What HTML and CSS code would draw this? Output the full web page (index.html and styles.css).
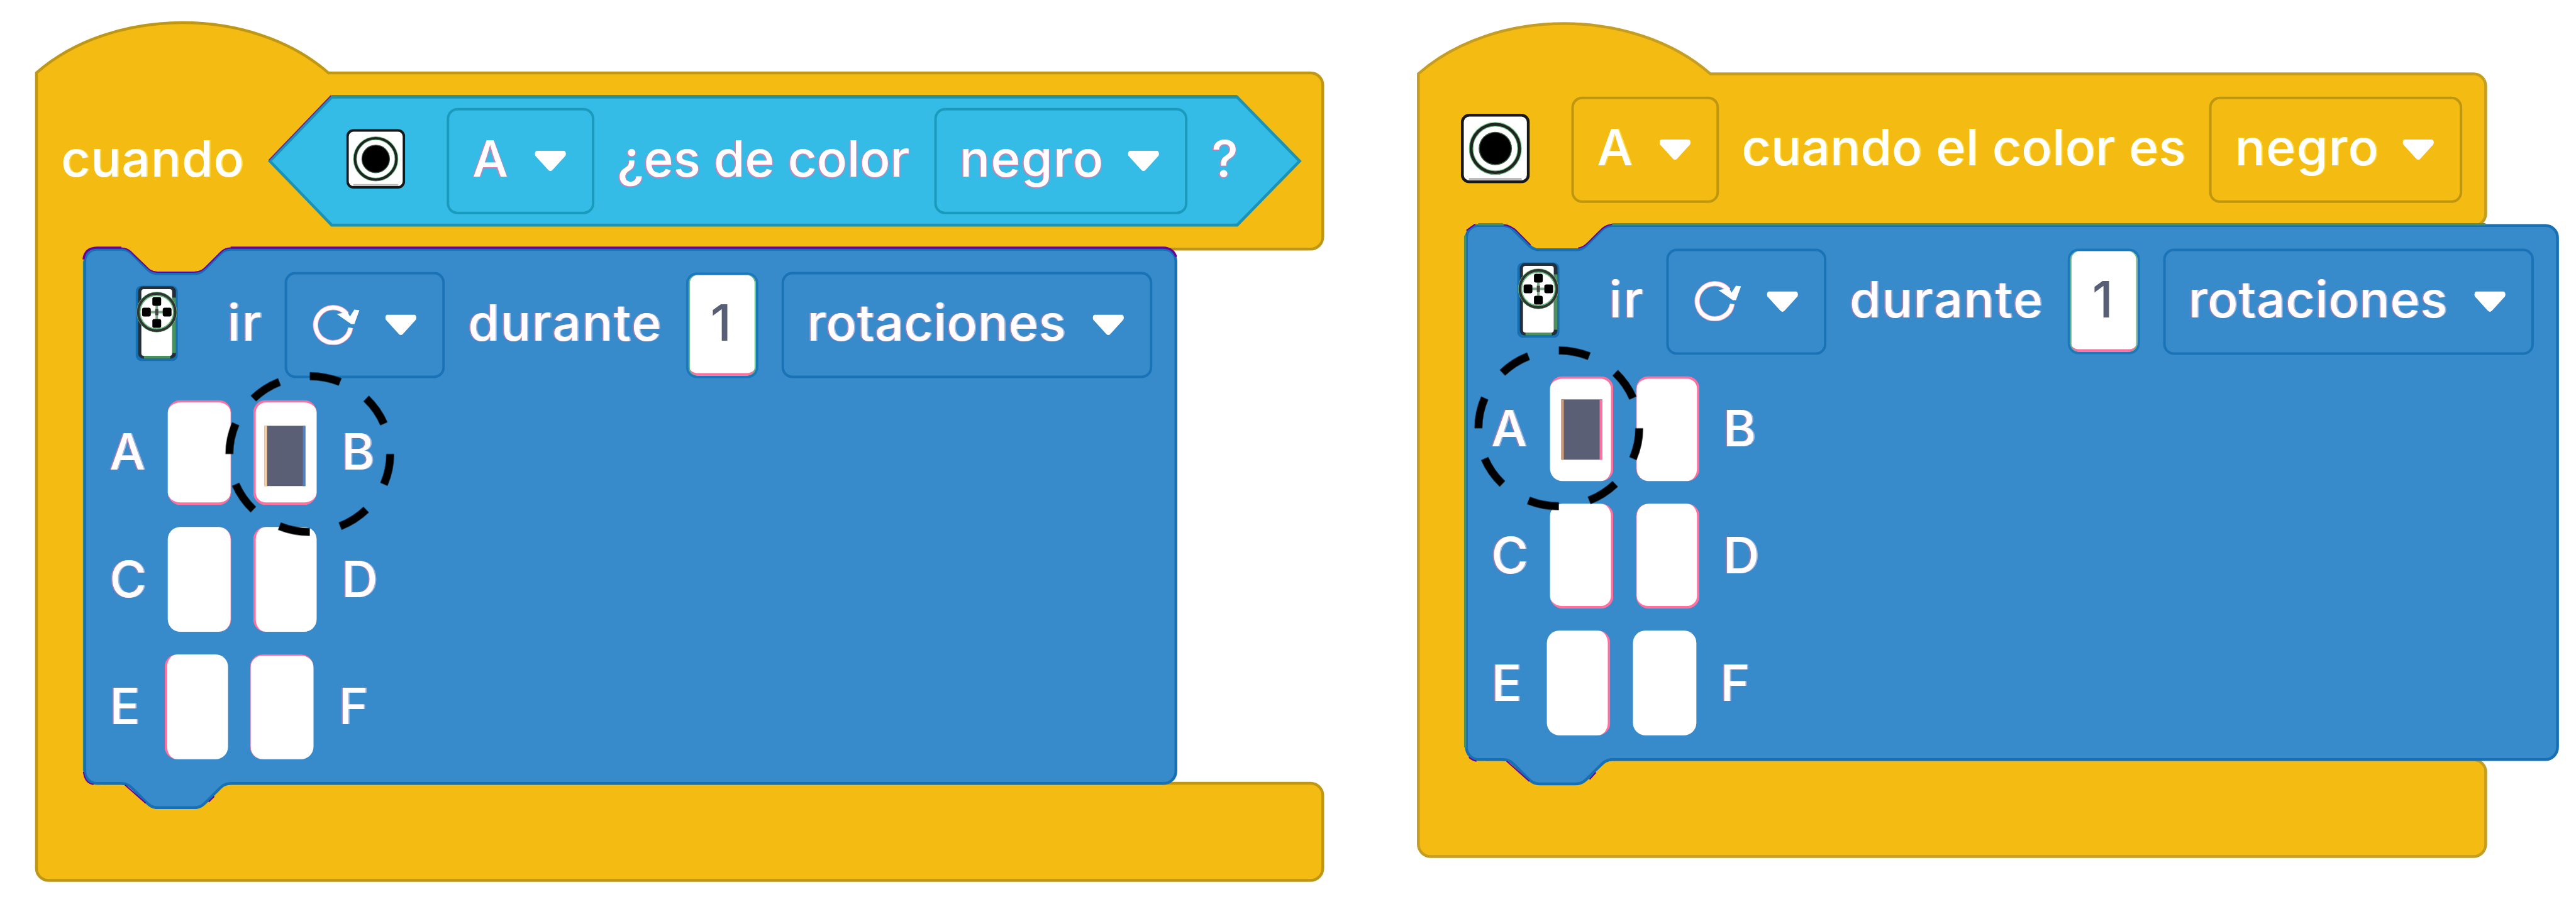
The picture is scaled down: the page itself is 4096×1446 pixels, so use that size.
FILE: index.html
```html
<!DOCTYPE html>
<html lang="es">
<head>
<meta charset="utf-8">
<title>Bloques: sensor de color y motor</title>
<link rel="stylesheet" href="styles.css">
</head>
<body>
<!-- Shared icons -->
<svg class="defs" aria-hidden="true">
  <symbol id="arrow" viewBox="0 0 50 33">
    <path fill="#fff" d="M3 0H47Q51 2 49 8L29 30Q25 35 21 30L1 8Q-1 2 3 0Z"/>
  </symbol>
  <symbol id="turn" viewBox="0 0 78 66">
    <path fill="none" stroke="#f99bbd" stroke-width="8.500" d="M62 39A28 28 0 1 1 56 17"/>
    <path fill="none" stroke="#fff" stroke-width="6.500" d="M62 39A28 28 0 1 1 56 17"/>
    <path fill="#fff" d="M40 17L63 33H68L76 11L68 10L61 21L57 14Z"/>
  </symbol>
  <symbol id="sensor" viewBox="0 0 110 111">
    <rect x="2.5" y="2.5" width="105" height="106" rx="11" fill="#fff" stroke="#16181a" stroke-width="4.6"/>
    <path stroke="#bcbcbc" stroke-width="3.5" d="M13 104H97"/>
    <circle cx="55" cy="55.5" r="38.5" fill="none" stroke="#62b979" stroke-width="7"/>
    <circle cx="55" cy="55.5" r="38.5" fill="none" stroke="#222" stroke-width="4.6"/>
    <circle cx="55" cy="55.5" r="26.5" fill="#3d5c46"/>
    <circle cx="55" cy="55.5" r="25" fill="#000"/>
  </symbol>
  <symbol id="motor" viewBox="0 0 69 121">
    <rect x="1" y="1" width="67" height="120" rx="9" fill="#146fb3"/>
    <rect x="5" y="2" width="60" height="115" rx="8" fill="#23303c"/>
    <path fill="#4a9160" d="M59 20H65V108H59ZM14 112H56V117H14Z"/>
    <rect x="10" y="6.500" width="49" height="106" rx="4" fill="#fff"/>
    <circle cx="34.500" cy="43" r="29" fill="#fff" stroke="#62b979" stroke-width="6.500"/>
    <circle cx="34.500" cy="43" r="29.500" fill="none" stroke="#333" stroke-width="4"/>
    <path stroke="#7fae8a" stroke-width="4" d="M34.500 30V56M21 43H48"/>
    <g fill="#000">
      <rect x="27.500" y="19" width="14" height="14" rx="3"/>
      <rect x="27.500" y="54" width="14" height="14" rx="3"/>
      <rect x="11" y="36" width="14" height="14" rx="3"/>
      <rect x="44" y="36" width="14" height="14" rx="3"/>
    </g>
    <rect x="32" y="38" width="5" height="10" fill="#444"/>
  </symbol>
  <symbol id="ring" viewBox="0 0 270 262">
    <ellipse cx="135" cy="131" rx="128" ry="124" pathLength="360" fill="none" stroke="#000" stroke-width="12.500" stroke-dasharray="22.500 22.500"/>
  </symbol>
  <symbol id="command" viewBox="0 0 1750 910" overflow="visible">
    <path transform="scale(4.84)" fill="#388bcb" stroke="#1670b3" stroke-width=".93" d="M0 4A4 4 0 0 1 4 0H12C14 0 15 1 16 2L20 6C21 7 22 8 24 8H36C38 8 39 7 40 6L44 2C45 1 46 0 48 0H354.800A4 4 0 0 1 358.800 4V171.700A4 4 0 0 1 354.800 175.700H48C46 175.700 45 176.700 44 177.700L40 181.700C39 182.700 38 183.700 36 183.700H24C22 183.700 21 182.700 20 181.700L16 177.700C15 176.700 14 175.700 12 175.700H4A4 4 0 0 1 0 171.700Z"/>
  </symbol>
</svg>

<main class="workspace">
  <section class="program program-when">
    <svg class="shape" viewBox="0 0 2190 1447">
      <path transform="translate(58 116) scale(4.84)" fill="#f4bb13" stroke="#bf9717" stroke-width=".93" d="M0 0C25 -22 71 -22 96 0H419A4 4 0 0 1 423 4V54A4 4 0 0 1 419 58H64C62 58 61 59 60 60L56 64C55 65 54 66 52 66H40C38 66 37 65 36 64L32 60C31 59 30 58 28 58H17L16 59V233.700H419A4 4 0 0 1 423 237.700V261.700A4 4 0 0 1 419 265.700H4A4 4 0 0 1 0 261.700Z"/>
      <path transform="translate(58 116) scale(4.84)" fill="#f4bb13" d="M15 57H22V64H15ZM15 228H22V235H15Z"/>
    </svg>
    <header class="event event-when">
      <span class="text w-cuando">cuando</span>
      <div class="condition">
        <svg class="shape" viewBox="0 0 1644 209">
          <path fill="#34bce7" stroke="#1b93b4" stroke-width="4.600" d="M2.500 104.500L101 2.500H1542L1641.500 104.500L1542 206.500H101Z"/>
          <path fill="none" stroke="#45905f" stroke-width="2.500" d="M101 .5H1542"/>
          <path fill="none" stroke="#6b1a9c" stroke-width="1.800" d="M1 103L100 0"/>
        </svg>
        <svg class="icon sensor-small"><use href="#sensor"/></svg>
        <div class="field field-port"><span class="text">A</span><svg class="arrow"><use href="#arrow"/></svg></div>
        <span class="text">¿es de color</span>
        <div class="field field-color"><span class="text w-negro">negro</span><svg class="arrow"><use href="#arrow"/></svg></div>
        <span class="text">?</span>
      </div>
    </header>
    <div class="command">
      <svg class="shape" viewBox="0 0 1750 910">
        <use href="#command" width="1750" height="910"/>
        <path class="edge edge-left" d="M-2 19V831"/>
        <path class="edge edge-purple" d="M-2 16Q0 -2 19 -2.500H58M232 -2.500H1717Q1732 -2 1737 12"/>
        <path class="edge edge-purple thin" d="M58 -2C68 -2 73 3 77 8L97 27C102 32 106 36 116 36.500H174C184 36 189 32 194 27L211 10C218 3 222 -2 232 -2M-2 832Q0 850 14 852M64 853L97 882M197 880L206 871"/>
      </svg>
      <div class="move">
        <svg class="icon motor"><use href="#motor"/></svg>
        <span class="text w-ir">ir</span>
        <div class="field field-turn"><svg class="turn"><use href="#turn"/></svg><svg class="arrow"><use href="#arrow"/></svg></div>
        <span class="text w-durante">durante</span>
        <span class="number">1</span>
        <div class="field field-unit"><span class="text w-rotaciones">rotaciones</span><svg class="arrow"><use href="#arrow"/></svg></div>
      </div>
      <div class="ports"><span class="letter">A</span><span class="slot ft fb fr1"></span><span class="slot ft fb fl"><i class="plug"></i></span><span class="letter">B</span></div>
      <div class="ports"><span class="letter">C</span><span class="slot fr1"></span><span class="slot fl"></span><span class="letter">D</span></div>
      <div class="ports ports-last"><span class="letter">E</span><span class="slot fl"></span><span class="slot fl1 ft1"></span><span class="letter">F</span></div>
      <svg class="ring"><use href="#ring"/></svg>
    </div>
  </section>

  <section class="program program-color">
    <svg class="shape" viewBox="0 0 1901 1447">
      <path transform="translate(58.5 117.5) scale(4.84)" fill="#f4bb13" stroke="#c59d22" stroke-width=".93" d="M0 0C25 -22 71 -22 96 0H347A4 4 0 0 1 351 4V46A4 4 0 0 1 347 50H64C62 50 61 51 60 52L56 56C55 57 54 58 52 58H40C38 58 37 57 36 56L32 52C31 51 30 50 28 50H17L16 51V225.700H347A4 4 0 0 1 351 229.700V253.500A4 4 0 0 1 347 257.500H4A4 4 0 0 1 0 253.500Z"/>
      <path transform="translate(58.5 117.5) scale(4.84)" fill="#f4bb13" d="M15 49H22V56H15ZM15 220H22V227H15Z"/>
    </svg>
    <header class="event event-color">
      <svg class="icon sensor-large"><use href="#sensor"/></svg>
      <div class="field field-port"><span class="text">A</span><svg class="arrow"><use href="#arrow"/></svg></div>
      <span class="text w-frase">cuando el color es</span>
      <div class="field field-color"><span class="text w-negro">negro</span><svg class="arrow"><use href="#arrow"/></svg></div>
    </header>
    <div class="command">
      <svg class="shape" viewBox="0 0 1750 910">
        <use href="#command" width="1750" height="910"/>
        <path class="edge edge-green" d="M-2 831V16"/>
        <path class="edge edge-green" d="M19 -2H58M232 -2H1622"/>
        <path class="edge edge-purple thin" d="M0 8L14 -2M60 -1Q68 0 77 6L102 31M178 36Q186 35 194 27L213 8Q220 0 232 -2M4 847Q10 852 16 853M64 853L100 885M196 882L206 871"/>
      </svg>
      <div class="move">
        <svg class="icon motor"><use href="#motor"/></svg>
        <span class="text w-ir">ir</span>
        <div class="field field-turn"><svg class="turn"><use href="#turn"/></svg><svg class="arrow"><use href="#arrow"/></svg></div>
        <span class="text w-durante">durante</span>
        <span class="number">1</span>
        <div class="field field-unit"><span class="text w-rotaciones">rotaciones</span><svg class="arrow"><use href="#arrow"/></svg></div>
      </div>
      <div class="ports"><span class="letter">A</span><span class="slot ft fr"><i class="plug"></i></span><span class="slot ft fr fl1"></span><span class="letter">B</span></div>
      <div class="ports"><span class="letter">C</span><span class="slot fr fb"></span><span class="slot fr fb fl1"></span><span class="letter">D</span></div>
      <div class="ports ports-last"><span class="letter">E</span><span class="slot fr"></span><span class="slot"></span><span class="letter">F</span></div>
      <svg class="ring"><use href="#ring"/></svg>
    </div>
  </section>
</main>
</body>
</html>
```
FILE: styles.css
```css
* {
  box-sizing: border-box;
}

html,
body {
  margin: 0;
  width: 4096px;
  height: 1446px;
  overflow: hidden;
  background: #fff;
}

body {
  font: 500 80px/100px Inter, "Open Sans", sans-serif;
  color: #fff;
}

svg {
  display: block;
  overflow: visible;
}

.defs {
  position: absolute;
  width: 0;
  height: 0;
}

.workspace {
  display: flex;
  width: 4100px;
  height: 1447px;
  transform: scale(0.99902);
  transform-origin: 0 0;
}

.program {
  position: relative;
  flex: none;
  height: 1447px;
}

.program-when {
  width: 2199px;
  padding-top: 116px;
}

.program-color {
  width: 1901px;
  padding-top: 117px;
}

/* Block outlines lie behind the fields */
.shape {
  position: absolute;
  left: 0;
  top: 0;
  z-index: 0;
}

.program-when > .shape { width: 2190px; height: 1447px; }
.program-color > .shape { width: 1901px; height: 1447px; }
.condition > .shape { width: 1644px; height: 209px; }
.command > .shape { width: 1750px; height: 910px; }

.event,
.move,
.condition {
  position: relative;
  display: grid;
  align-items: center;
  justify-items: start;
}

.event-when {
  height: 280.5px;
  padding-left: 97px;
  grid-template-columns: 330px auto;
  --line: #b9900f;
}

.event-color {
  height: 242px;
  padding-left: 126px;
  grid-template-columns: 175.7px 271.3px 744px auto;
  --line: #bf960f;
}

.condition {
  width: 1644px;
  height: 209px;
  padding-left: 124px;
  grid-template-columns: 160px 271.500px 504px 442px auto;
  --line: #1a9bbd;
}

.text {
  position: relative;
  white-space: pre;
  padding-bottom: 8px;
}

.event .text { text-shadow: 2px 0 0 rgba(255, 236, 90, 0.7); }
.condition .text { text-shadow: -2px 1px 0 rgba(255, 112, 160, 0.75), 1.500px 1px 0 rgba(255, 112, 160, 0.6); }
.command .text,
.letter { text-shadow: -2px 0 0 rgba(255, 112, 160, 0.55), 2px 0 0 rgba(190, 190, 225, 0.8); }

.w-cuando { letter-spacing: 1.1px; }
.w-negro { letter-spacing: 1.5px; }
.w-frase { letter-spacing: 0.35px; }
.w-ir { letter-spacing: 3px; }
.w-durante { letter-spacing: 2px; }
.w-rotaciones { letter-spacing: 0.9px; }

.field {
  position: relative;
  display: flex;
  align-items: center;
  justify-content: space-between;
  height: 169px;
  padding: 0 41px 0 37px;
  border: 4px solid var(--line);
  border-radius: 17px;
}

.field-port { width: 235px; }
.field-color { width: 403px; }
.field-turn { width: 255px; padding-left: 39px; }
.field-unit { width: 590.5px; }

.arrow { width: 50px; height: 33px; }
.turn { width: 78px; height: 66px; margin-bottom: 4px; }
.icon { position: relative; }
.sensor-small { width: 94px; height: 98px; margin-bottom: 7px; }
.sensor-large { width: 110px; height: 111px; margin-bottom: 4px; }
.motor { width: 69px; height: 121px; margin-bottom: 6px; }

.command {
  position: relative;
  margin-left: 135px;
  width: 1737px;
  height: 850.5px;
  padding-top: 20px;
  --line: #1973b6;
}

.move {
  height: 202.5px;
  padding-left: 80px;
  grid-template-columns: 147px 91px 292px 347px 151.5px auto;
}

.number {
  width: 115px;
  height: 168px;
  padding: 26px 4px 0 0;
  border: 4px solid #1b78bb;
  border-radius: 17px;
  background: #fff;
  box-shadow: inset 2px 0 #62b979, inset -2px 0 #62b979, inset 0 -4px #ff709f;
  color: #575e75;
  text-align: center;
}

.ports {
  position: relative;
  display: grid;
  grid-template-columns: 92px 136.5px 140.5px auto;
  align-items: center;
  justify-items: start;
  height: 202.5px;
  padding-left: 39.5px;
}

.ports-last {
  padding-left: 39.5px;
  grid-template-columns: 87px 136.500px 141px auto;
}

.program-color .ports { grid-template-columns: 93px 137.5px 138.500px auto; }
.program-color .ports-last { grid-template-columns: 88px 137.5px 139px auto; }

.letter { padding-bottom: 2px; }

.slot {
  width: 101px;
  height: 167px;
  padding: 37px 14px 0 14px;
  border: 0 solid #ff709f;
  border-radius: 20px;
  background: #fff;
}

.ft { border-top-width: 4px; }
.ft1 { border-top-width: 2px; }
.fb { border-bottom-width: 4px; }
.fr { border-right-width: 4px; }
.fr1 { border-right-width: 1.500px; }
.fl { border-left-width: 4px; }
.fl1 { border-left-width: 1.500px; }

.plug {
  display: block;
  width: 65px;
  height: 96px;
  border-left: 4px solid #fdd09c;
  border-right: 4px solid #5580c0;
  background: #5a5f75;
}

.program-color .plug {
  margin: -4px 0 0 4px;
  border-left-color: #d09c70;
  border-right-color: #ff709f;
}

.edge { fill: none; stroke-width: 3.500px; }
.edge.thin { stroke-width: 2px; }
.edge-purple { stroke: #6b009c; }
.edge-green { stroke: #46915f; }
.edge-left { stroke: #2d8580; stroke-width: 2px; }

/* Dashed marker drawn over the selected port */
.ring {
  position: absolute;
  left: 222.5px;
  top: 195px;
  width: 270px;
  height: 262px;
}

.program-color .ring {
  left: 12px;
  top: 191.5px;
}
```
